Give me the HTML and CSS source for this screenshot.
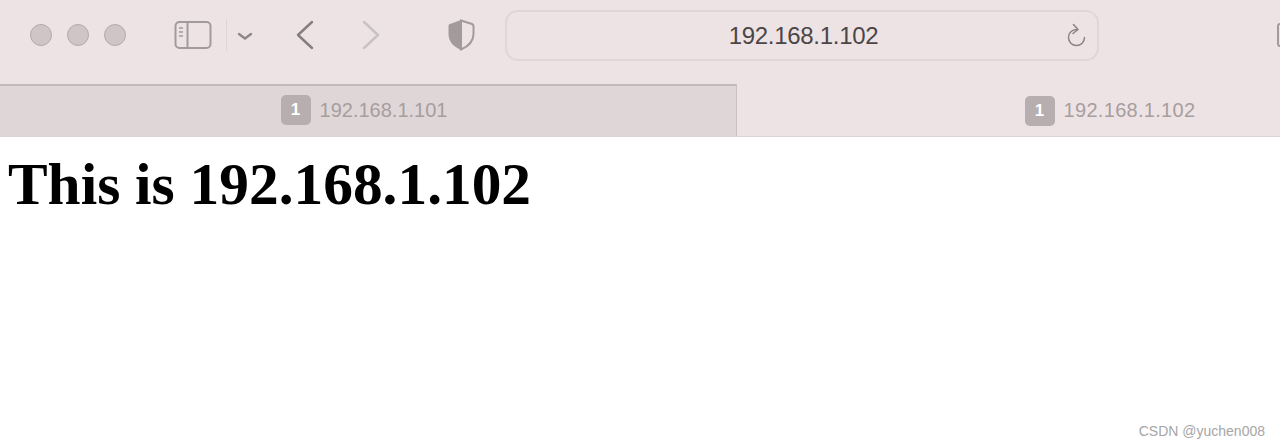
FILE: index.html
```html
<!DOCTYPE html>
<html lang="en">
<head>
    <meta charset="UTF-8">
    <title>192.168.1.102</title>
    <link rel="stylesheet" href="styles.css">
</head>
<body>
    <div class="toolbar">
        <div class="lights">
            <span class="light"></span>
            <span class="light"></span>
            <span class="light"></span>
        </div>
        <svg class="sidebar-icon" width="38" height="30" viewBox="0 0 38 30" fill="none" stroke="#a39a9c" stroke-width="2">
            <rect x="1.5" y="2" width="35" height="26" rx="4"/>
            <path d="M13.5 2v26"/>
            <path d="M5 8h4M5 12h4M5 16h4" stroke-width="1.6"/>
        </svg>
        <span class="divider"></span>
        <svg class="chevron" width="16" height="10" viewBox="0 0 16 10" fill="none" stroke="#8f8789" stroke-width="2.4" stroke-linecap="round" stroke-linejoin="round">
            <path d="M2 3l6 4.5L14 3"/>
        </svg>
        <svg class="back" width="20" height="30" viewBox="0 0 20 30" fill="none" stroke="#857d7f" stroke-width="2.4" stroke-linecap="round" stroke-linejoin="round">
            <path d="M17 2L3 15l14 13"/>
        </svg>
        <svg class="forward" width="20" height="30" viewBox="0 0 20 30" fill="none" stroke="#c9c1c3" stroke-width="2.4" stroke-linecap="round" stroke-linejoin="round">
            <path d="M3 2l14 13L3 28"/>
        </svg>
        <svg class="shield" width="28" height="32" viewBox="0 0 28 32">
            <path d="M14 1.500L25 5c1 .3 1.500 1 1.500 2v8c0 8-5.500 12.500-12.500 15.500z" fill="none" stroke="#a39a9c" stroke-width="2"/>
            <path d="M14 1L3 5c-1 .3-1.500 1-1.500 2v8c0 8 5.500 13 12.500 16z" fill="#a39a9c"/>
        </svg>
        <div class="url-bar">
            <span class="url">192.168.1.102</span>
            <svg class="reload" width="22" height="26" viewBox="0 0 22 26" fill="none" stroke="#8a8284" stroke-width="1.500" stroke-linecap="round" stroke-linejoin="round">
                <path d="M11.500 6.500a8 8 0 1 0 8 8"/>
                <path d="M8.500 1.500l4.500 5-5 4"/>
            </svg>
        </div>
        <span class="cut-icon"></span>
    </div>
    <div class="tabs">
        <div class="tab tab-inactive">
            <span class="tab-badge">1</span>
            <span class="tab-title">192.168.1.101</span>
        </div>
        <div class="tab tab-active">
            <span class="tab-badge">1</span>
            <span class="tab-title">192.168.1.102</span>
        </div>
    </div>
    <h1 class="page-title">This is 192.168.1.102</h1>
    <div class="watermark">CSDN @yuchen008</div>
</body>
</html>
```

FILE: styles.css
```css
html, body {
    margin: 0;
    height: 100%;
    overflow: hidden;
}
body {
    background: #fff;
    font-family: "Liberation Sans", Arial, sans-serif;
}
.toolbar {
    height: 84px;
    background: #eee3e4;
    display: flex;
    align-items: center;
    padding-left: 30px;
    padding-bottom: 14px;
    box-sizing: border-box;
    overflow: hidden;
}
.toolbar > * {
    flex: none;
}
.lights {
    display: flex;
    gap: 15px;
}
.light {
    width: 20px;
    height: 20px;
    border-radius: 50%;
    background: #cfc5c7;
    border: 1px solid #b3a9ab;
}
.sidebar-icon {
    margin-left: 48px;
}
.divider {
    width: 1px;
    height: 32px;
    background: #dfd5d6;
    margin-left: 14px;
}
.chevron {
    margin-left: 10px;
    margin-top: 1px;
}
.back {
    margin-left: 42px;
}
.forward {
    margin-left: 46px;
}
.shield {
    margin-left: 66px;
}
.url-bar {
    width: 594px;
    height: 51px;
    margin-left: 30px;
    margin-top: 1px;
    box-sizing: border-box;
    border: 2px solid #e0d6d7;
    border-radius: 13px;
    display: flex;
    align-items: center;
    justify-content: center;
    position: relative;
}
.url {
    font-size: 24px;
    color: #4a4647;
    letter-spacing: -0.3px;
    margin: 1px 0 0 3px;
}
.reload {
    position: absolute;
    right: 10px;
    top: 11px;
}
.cut-icon {
    width: 12px;
    height: 24px;
    margin-left: 178px;
    box-sizing: border-box;
    border: 2px solid #a39a9c;
    border-radius: 3px;
}
.tabs {
    display: flex;
    height: 53px;
    background: #eee3e4;
    border-bottom: 1px solid #dcd4d5;
    box-sizing: border-box;
}
.tab {
    display: flex;
    align-items: center;
    justify-content: center;
    gap: 9px;
    box-sizing: border-box;
}
.tab-inactive {
    width: 737px;
    background: #dfd6d7;
    border-top: 2px solid #c4babc;
    border-right: 1px solid #c9c0c1;
    padding: 0 8px 2px 0;
}
.tab-active {
    flex: 1;
    border-top: 1px solid #eee3e4;
    padding-left: 203px;
}
.tab-badge {
    width: 30px;
    height: 30px;
    border-radius: 5px;
    background: #b6aeaf;
    color: #fff;
    font-size: 17px;
    font-weight: bold;
    display: flex;
    align-items: center;
    justify-content: center;
}
.tab-title {
    font-size: 20px;
    color: #a69e9f;
}
.tab-active .tab-title {
    letter-spacing: 0.3px;
}
.page-title {
    margin: 14px 0 0 8px;
    font-family: "Liberation Serif", "Times New Roman", serif;
    font-size: 59.4px;
    line-height: 66px;
    font-weight: bold;
    color: #000;
}
.watermark {
    position: absolute;
    right: 15px;
    bottom: 9px;
    font-size: 14px;
    color: #a6a6a6;
}
```
